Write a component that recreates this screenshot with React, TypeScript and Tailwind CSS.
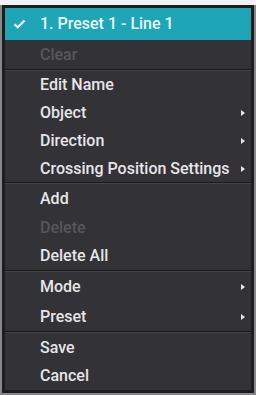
import React from "react";

type Item =
  | { kind: "item"; label: string; h: string; disabled?: boolean; sub?: boolean; checked?: boolean }
  | { kind: "sep" };

const items: Item[] = [
  { kind: "item", label: "1. Preset 1 - Line 1", h: "h-[32px]", checked: true },
  { kind: "item", label: "Clear", h: "h-[29px]", disabled: true },
  { kind: "sep" },
  { kind: "item", label: "Edit Name", h: "h-[28px]" },
  { kind: "item", label: "Object", h: "h-[28px]", sub: true },
  { kind: "item", label: "Direction", h: "h-[28px]", sub: true },
  { kind: "item", label: "Crossing Position Settings", h: "h-[27px]", sub: true },
  { kind: "sep" },
  { kind: "item", label: "Add", h: "h-[29px]" },
  { kind: "item", label: "Delete", h: "h-[29px]", disabled: true },
  { kind: "item", label: "Delete All", h: "h-[28px]" },
  { kind: "sep" },
  { kind: "item", label: "Mode", h: "h-[30px]", sub: true },
  { kind: "item", label: "Preset", h: "h-[29px]", sub: true },
  { kind: "sep" },
  { kind: "item", label: "Save", h: "h-[29px]" },
  { kind: "item", label: "Cancel", h: "h-[28px]" },
];

export default function App() {
  return (
    <div
      className="w-[256px] h-[395px] bg-[#f2f2f2] pt-[5px] overflow-hidden"
      style={{ fontFamily: "Roboto, 'Liberation Sans', sans-serif" }}
    >
      <div className="h-[390px] bg-[#88888b] pl-[2px] pr-[2px] pb-[2px]">
        <div className="h-full border-[3px] border-[#1d1d20] bg-[#333237] flex flex-col">
          {items.map((it, i) =>
            it.kind === "sep" ? (
              <div key={i} className="h-[2px] border-t border-t-[#1a1a1d] border-b border-b-[#444348]" />
            ) : (
              <div
                key={i}
                className={`${it.h} flex items-center shrink-0 ${it.checked ? "bg-[#1ea6b6]" : ""}`}
              >
                <div className="w-[35px] flex items-center justify-start pl-[8px]">
                  {it.checked && (
                    <svg width="13" height="10" viewBox="0 0 13 10">
                      <path d="M1.5 5.2 L4.8 8.3 L11.5 1.5" fill="none" stroke="#f4fbfc" strokeWidth="2.2" />
                    </svg>
                  )}
                </div>
                <span
                  className={`flex-1 text-[16px] font-medium leading-none ${
                    it.disabled ? "text-[#58575c]" : it.checked ? "text-[#eaf8fa]" : "text-[#e6e6e8]"
                  }`}
                >
                  {it.label}
                </span>
                {it.sub && (
                  <svg width="4" height="6" viewBox="0 0 4 6" className="mr-[6px]">
                    <path d="M0 0 L4 3 L0 6 Z" fill="#e6e6e8" />
                  </svg>
                )}
              </div>
            )
          )}
        </div>
      </div>
    </div>
  );
}
